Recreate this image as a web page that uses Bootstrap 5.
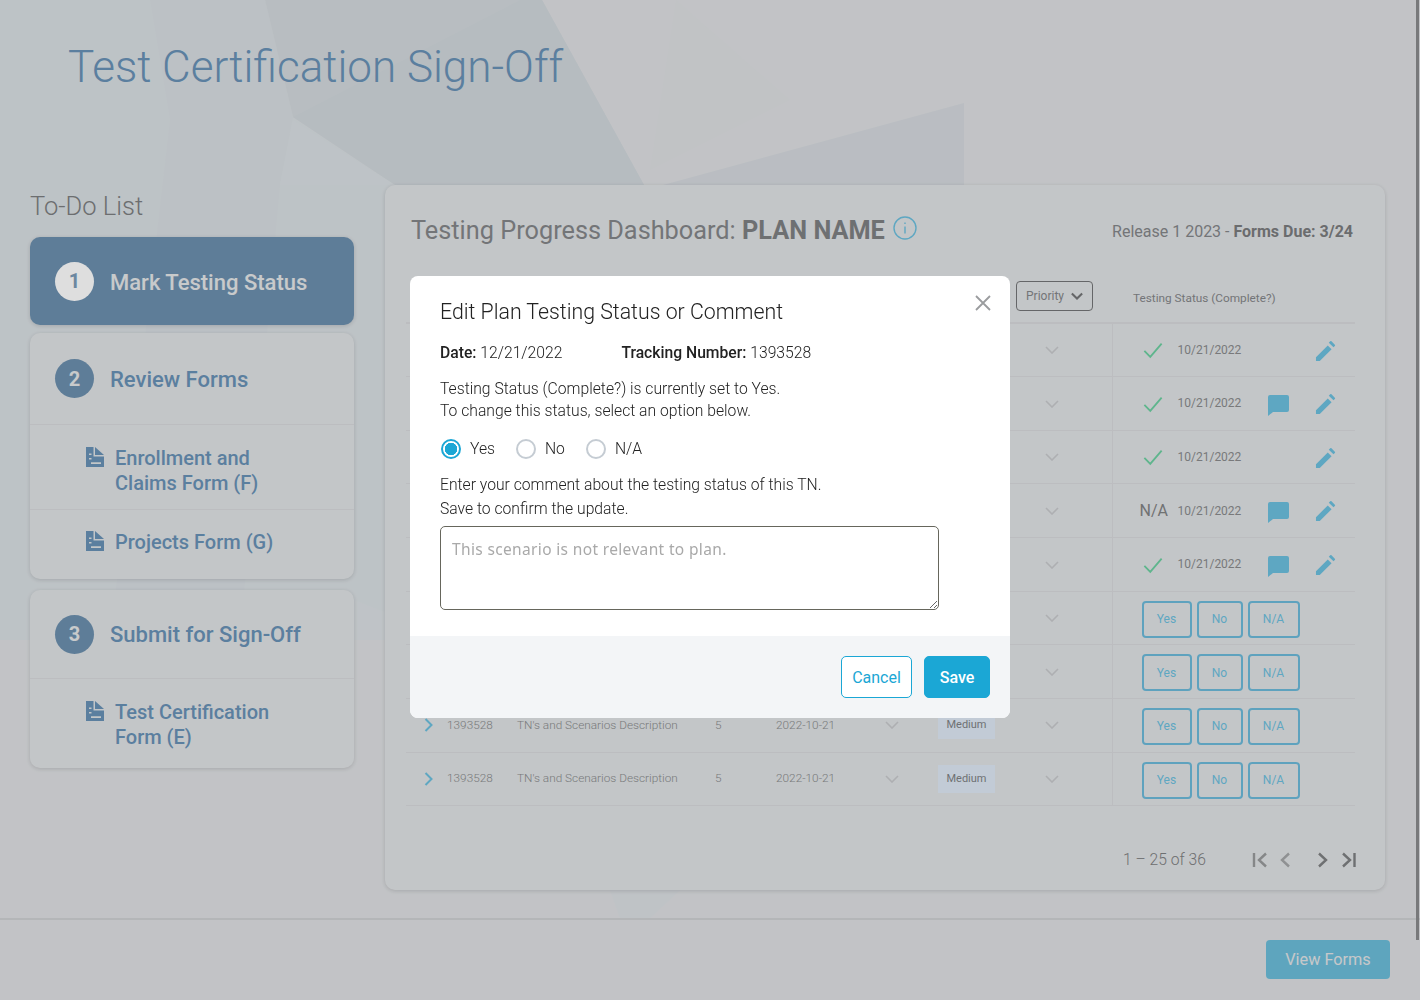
<!DOCTYPE html>
<html lang="en">
<head>
    <meta charset="UTF-8">
    <meta name="viewport" content="width=device-width, initial-scale=1.0">
    <title>Test Certification Sign-Off</title>
    <link href="https://cdn.jsdelivr.net/npm/bootstrap@5.3.0/dist/css/bootstrap.min.css" rel="stylesheet">
    <style>
        body { font-family: Roboto, "Liberation Sans", sans-serif; background: #dfe1e4; height: 1000px; overflow: hidden; position: relative; color: #818385; }
        .bg-art { position: absolute; left: 0; top: 0; z-index: 0; }
        .page-wrap { position: relative; z-index: 1; }
        .fake-scroll { position: absolute; top: 0; right: 1px; width: 3px; height: 940px; background: #8a8c8e; z-index: 2; }

        .page-head { height: 185px; padding: 40px 0 0 68px; }
        .page-head h1 { font-size: 44px; font-weight: 300; line-height: 55px; color: #6992b7; margin: 0; }

        .todo-col { width: 324px; margin-left: 30px; margin-right: 31px; }
        .todo-title { font-size: 25.5px; font-weight: 300; line-height: 42px; margin: 0 0 10px; color: #7d7f81; }
        .step-box { background: #e1e4e6; border: 0; border-radius: 10px; box-shadow: 0 1px 4px rgba(0,0,0,.14); margin-bottom: 8px; overflow: hidden; }
        .step-box.is-active { background: #6d90af; height: 88px; }
        .step-head { display: flex; align-items: center; gap: 16px; padding: 2px 0 0 25px; height: 91px; font-size: 22px; font-weight: 500; color: #6992b7; }
        .step-head.head-short { height: 88px; padding-top: 0; }
        .head-short .step-num { margin-top: 0; }
        .is-active .step-head { height: 88px; color: #e6e8ea; }
        .step-num { width: 39px; height: 39px; margin-top: -2px; border-radius: 50%; background: #6d90af; color: #e6e8ea; font-size: 20px; font-weight: 700; display: flex; align-items: center; justify-content: center; flex: none; }
        .is-active .step-num { background: #fff; color: #7d9cb8; }
        .step-link { display: flex; gap: 11px; border-top: 1px solid #d8dadd; padding: 21px 20px 0 56px; font-size: 20px; font-weight: 500; line-height: 25px; color: #6992b7; }
        .step-link svg { flex: none; width: 18px; height: 20px; margin-top: 1px; fill: #6992b7; }
        .link-two { height: 85px; }
        .link-one { height: 70px; padding-top: 20px; }
        .link-last { height: 90px; }
        .step-gap { margin-bottom: 11px; }

        .main-box { width: 1000px; height: 705px; background: #e1e4e6; border-radius: 10px; box-shadow: 0 1px 4px rgba(0,0,0,.14); padding: 0 30px 0 21px; }
        .main-top { height: 85px; padding: 28px 2px 0 5px; }
        .main-top h2 { font-size: 25.3px; font-weight: 400; line-height: 36px; margin: 0; color: #85878a; }
        .main-top h2 b { font-weight: 700; color: #7f8183; }
        .info-icon { width: 24px; height: 24px; margin: -8px 0 0 2px; }
        .release-txt { font-size: 16px; margin-top: 7px; color: #85878a; }
        .release-txt b { font-weight: 700; color: #7b7d7f; }

        .plan-table { table-layout: fixed; width: 949px; margin: 0; --bs-table-bg: transparent; --bs-table-color: #8a8c8e; font-size: 11.8px; font-weight: 300; }
        .plan-table th { height: 53px; padding: 0; border-bottom: 2px solid #d8dadd; font-size: 11.8px; font-weight: 400; color: #85878a; vertical-align: middle; }
        .plan-table td { height: 53.67px; padding: 0; border-bottom: 1px solid #d8dadd; vertical-align: middle; }
        .plan-table .cell-status { border-left: 1px solid #d8dadd; padding-left: 29px; }
        .plan-table th.cell-status { padding-left: 21px; border-left: 0; padding-top: 5px; }
        .prio-btn { display: inline-flex; align-items: center; gap: 7px; width: 77px; height: 30px; margin-left: -5px; padding: 0 9px; font-size: 12px; color: #85878a; border: 1px solid #747678; border-radius: 4px; }
        .prio-tag { display: block; width: 57px; height: 28px; line-height: 28px; text-align: center; background: #dfeaf6; font-size: 11px; font-weight: 400; color: #808285; }
        .ico-next { width: 9px; height: 14px; margin-left: 18px; stroke: #6dc0df; stroke-width: 2; fill: none; }
        .ico-down { width: 14px; height: 8px; stroke: #c8cacd; stroke-width: 1.6; fill: none; }
        .ico-date { margin-left: 19px; }
        .prio-btn .ico-down { stroke: #747678; stroke-width: 2.4; }
        .st-row { display: flex; align-items: center; }
        .st-mark { width: 36px; flex: none; font-size: 16px; font-weight: 400; white-space: nowrap; color: #818385; }
        .st-mark.is-na { margin-left: -2px; width: 38px; }
        .st-mark svg { width: 20px; height: 17px; stroke: #6dd0a2; stroke-width: 2; fill: none; margin-left: 1px; }
        .st-date { width: 89px; flex: none; font-size: 12px; font-weight: 400; color: #8a8c8e; }
        .st-note { width: 48px; flex: none; height: 22px; margin-top: 3px; }
        .st-note svg { display: block; width: 22px; height: 22px; fill: #6dc0df; }
        .st-edit { width: 23px; height: 23px; fill: #6dc0df; }
        .pick-row { display: flex; gap: 5px; margin-top: 2px; }
        .pick-btn { height: 37px; padding: 0; font-size: 12px; color: #6dc0df; border: 2px solid #6dbbdb; border-radius: 4px; background: transparent; }
        .pick-yes { width: 50px; } .pick-no { width: 46px; } .pick-na { width: 52px; }
        .pager-row { height: 107px; margin-right: -1px; }
        .pager-txt { font-size: 15.7px; font-weight: 300; margin-right: 46px; color: #7e8082; }
        .pager-row svg { width: 16px; height: 16px; fill: none; stroke-width: 2.4; }
        .pager-icons { display: flex; align-items: center; gap: 10px; }
        .pager-icons .pg-gap { margin-left: 10px; }

        .page-foot { margin-top: 28px; border-top: 2px solid #cfd1d4; padding: 20px 30px 0 0; }
        .view-btn { width: 124px; height: 39px; padding: 1px 0 0; font-size: 16.3px; color: #e4e6e8; background: #6dbedb; border: 0; border-radius: 4px; }

        .modal-backdrop.show { opacity: .13; background: #000; }
        .edit-dialog { max-width: 600px; width: 600px; margin: 276px 0 0 410px; }
        .edit-dialog .modal-content { height: 442px; border: 0; border-radius: 8px; overflow: hidden; font-size: 15.7px; color: #333; font-weight: 400; }
        .edit-dialog .modal-header { border: 0; padding: 21px 17px 0 30px; align-items: flex-start; }
        .edit-dialog .modal-title { font-size: 21.3px; font-weight: 300; line-height: 30px; color: #222; }
        .close-x { width: 20px; height: 20px; margin: -7px 0 0; background: none; border: 0; padding: 0; stroke: #9a9c9e; }
        .edit-dialog .modal-body { padding: 14px 30px 0; flex: none; height: 309px; }
        .edit-dialog .modal-body p { line-height: 24px; margin: 0; font-weight: 300; color: #222; }
        .edit-dialog .modal-body p.tight { line-height: 22px; }
        .meta-row { display: flex; gap: 59px; margin-bottom: 13px; font-weight: 300; line-height: 24px; color: #222; }
        .meta-row b { font-weight: 500; }
        .radio-row { display: flex; gap: 20px; margin: 15px 0 12px; height: 24px; font-weight: 300; color: #222; }
        .radio-row .form-check { display: flex; align-items: center; gap: 9px; padding: 0; margin: 0; min-height: 0; }
        .radio-row .form-check-input { float: none; width: 20px; height: 20px; margin: 0 0 0 1px; border: 2px solid #c5ccd3; }
        .radio-row .form-check-input:checked { background: #fff radial-gradient(circle, #1ba7d5 0 6px, #fff 6.5px); border-color: #1ba7d5; }
        .note-area { height: 84px; margin-top: 5px; width: 499px; border: 1px solid #66665c; border-radius: 5px; padding: 10px 11px; font-family: "Noto Sans", sans-serif; font-size: 15.5px; line-height: 24px; }
        .note-area::placeholder { color: #a9a9a9; letter-spacing: .35px; }
        .edit-dialog .modal-footer { background: #f3f5f7; border: 0; border-radius: 0; padding: 20px; flex: 1; align-items: flex-start; gap: 12px; }
        .edit-dialog .modal-footer .btn { margin: 0; height: 42px; padding: 1px 0 0; font-size: 16px; border-radius: 5px; }
        .btn-cancel { width: 71px; background: #fff; color: #1ba7d5; border: 1px solid #1ba7d5; font-weight: 400; }
        .btn-save { width: 66px; background: #1ba7d5; color: #fff; border: 1px solid #1ba7d5; font-weight: 500; }
    </style>
</head>
<body>
    <svg width="0" height="0" class="position-absolute">
        <symbol id="i-doc" viewBox="0 0 18 20"><path fill-rule="evenodd" d="M0 0h7.500v9.500H18V20H0zM3 6.500v1.600h2.500V6.500zM3 11v1.600h2.500V11zM5 15.200v1.800h10v-1.800z"/><path d="M9 0l9 8H9z"/></symbol>
        <symbol id="i-next" viewBox="0 0 9 14"><path d="M1.500 1l6 6-6 6"/></symbol>
        <symbol id="i-down" viewBox="0 0 14 8"><path d="M1 1l6 6 6-6"/></symbol>
        <symbol id="i-check" viewBox="0 0 22 18"><path d="M1.500 9.500l6.500 6.500L20.500 1.500"/></symbol>
        <symbol id="i-note" viewBox="0 0 22 22"><path d="M3 1h17a2 2 0 0 1 2 2v13a2 2 0 0 1-2 2H6l-5 4V3a2 2 0 0 1 2-2z"/></symbol>
        <symbol id="i-edit" viewBox="0 0 24 24"><path d="M1 19v4h4L17.300 10.700l-4-4zM20.700 7.300a1 1 0 0 0 0-1.400l-3.500-3.500a1 1 0 0 0-1.400 0l-1.400 1.400 4.900 4.900z"/></symbol>
    </svg>

    <svg class="bg-art" width="1420" height="918" viewBox="0 0 1420 918">
        <polygon points="0,0 265,0 293,117 395,185 385,640 0,640" fill="#dae0e4"/>
        <polygon points="150,0 265,0 293,117 280,185 240,640 110,640 170,120" fill="#d8dee3"/>
        <polygon points="265,0 542,0 644,185 395,185 293,117" fill="#d4dade"/>
        <polygon points="293,117 520,0 542,0 644,185 395,185" fill="#d2d8dd"/>
        <polygon points="293,120 280,185 395,185" fill="#dbe1e5"/>
        <polygon points="663,185 964,103 964,185" fill="#d6dadf"/>
        <polygon points="676,0 790,100 650,170" fill="#dee0e3"/>
        <polygon points="354,600 385,612 385,640 354,640" fill="#dce1e5"/>
        <polygon points="610,890 680,890 650,918 620,918" fill="#dce0e4"/>
    </svg>
    <div class="fake-scroll"></div>

    <div class="page-wrap">
        <div class="page-head"><h1>Test Certification Sign-Off</h1></div>

        <div class="d-flex">
            <div class="todo-col">
                <h3 class="todo-title">To-Do List</h3>
                <div class="step-box is-active">
                    <div class="step-head"><span class="step-num">1</span>Mark Testing Status</div>
                </div>
                <div class="step-box step-gap">
                    <div class="step-head"><span class="step-num">2</span>Review Forms</div>
                    <div class="step-link link-two"><svg><use href="#i-doc"/></svg><span>Enrollment and<br>Claims Form (F)</span></div>
                    <div class="step-link link-one"><svg><use href="#i-doc"/></svg><span>Projects Form (G)</span></div>
                </div>
                <div class="step-box">
                    <div class="step-head head-short"><span class="step-num">3</span>Submit for Sign-Off</div>
                    <div class="step-link link-last"><svg><use href="#i-doc"/></svg><span>Test Certification<br>Form (E)</span></div>
                </div>
            </div>

            <div class="main-box">
                <div class="main-top d-flex justify-content-between align-items-start">
                    <h2>Testing Progress Dashboard: <b>PLAN NAME</b>
                        <svg class="info-icon" viewBox="0 0 24 24" fill="none" stroke="#6dc0df" stroke-width="1.4"><circle cx="12" cy="12" r="11"/><path d="M12 10.500v7M12 6.500v1.600"/></svg>
                    </h2>
                    <div class="release-txt">Release 1 2023 - <b>Forms Due: 3/24</b></div>
                </div>

                <table class="table plan-table">
                    <colgroup><col style="width:41px"><col style="width:70px"><col style="width:198px"><col style="width:61px"><col style="width:90px"><col style="width:72px"><col style="width:83px"><col style="width:91px"><col style="width:243px"></colgroup>
                    <thead>
                        <tr>
                            <th colspan="7"></th>
                            <th><span class="prio-btn">Priority <svg class="ico-down"><use href="#i-down"/></svg></span></th>
                            <th class="cell-status">Testing Status (Complete?)</th>
                        </tr>
                    </thead>
                    <tbody>
                        <!-- rows 1-7 sit under the dialog, only the right hand cells show -->
                        <tr><td colspan="7"></td><td><svg class="ico-down ms-4"><use href="#i-down"/></svg></td>
                            <td class="cell-status"><div class="st-row"><span class="st-mark"><svg><use href="#i-check"/></svg></span><span class="st-date">10/21/2022</span><span class="st-note"></span><svg class="st-edit"><use href="#i-edit"/></svg></div></td></tr>
                        <tr><td colspan="7"></td><td><svg class="ico-down ms-4"><use href="#i-down"/></svg></td>
                            <td class="cell-status"><div class="st-row"><span class="st-mark"><svg><use href="#i-check"/></svg></span><span class="st-date">10/21/2022</span><span class="st-note"><svg><use href="#i-note"/></svg></span><svg class="st-edit"><use href="#i-edit"/></svg></div></td></tr>
                        <tr><td colspan="7"></td><td><svg class="ico-down ms-4"><use href="#i-down"/></svg></td>
                            <td class="cell-status"><div class="st-row"><span class="st-mark"><svg><use href="#i-check"/></svg></span><span class="st-date">10/21/2022</span><span class="st-note"></span><svg class="st-edit"><use href="#i-edit"/></svg></div></td></tr>
                        <tr><td colspan="7"></td><td><svg class="ico-down ms-4"><use href="#i-down"/></svg></td>
                            <td class="cell-status"><div class="st-row"><span class="st-mark is-na">N/A</span><span class="st-date">10/21/2022</span><span class="st-note"><svg><use href="#i-note"/></svg></span><svg class="st-edit"><use href="#i-edit"/></svg></div></td></tr>
                        <tr><td colspan="7"></td><td><svg class="ico-down ms-4"><use href="#i-down"/></svg></td>
                            <td class="cell-status"><div class="st-row"><span class="st-mark"><svg><use href="#i-check"/></svg></span><span class="st-date">10/21/2022</span><span class="st-note"><svg><use href="#i-note"/></svg></span><svg class="st-edit"><use href="#i-edit"/></svg></div></td></tr>
                        <tr><td colspan="7"></td><td><svg class="ico-down ms-4"><use href="#i-down"/></svg></td>
                            <td class="cell-status"><div class="pick-row"><button class="btn pick-btn pick-yes">Yes</button><button class="btn pick-btn pick-no">No</button><button class="btn pick-btn pick-na">N/A</button></div></td></tr>
                        <tr><td colspan="7"></td><td><svg class="ico-down ms-4"><use href="#i-down"/></svg></td>
                            <td class="cell-status"><div class="pick-row"><button class="btn pick-btn pick-yes">Yes</button><button class="btn pick-btn pick-no">No</button><button class="btn pick-btn pick-na">N/A</button></div></td></tr>
                        <tr><td><svg class="ico-next"><use href="#i-next"/></svg></td><td>1393528</td><td>TN's and Scenarios Description</td><td>5</td><td>2022-10-21</td><td><svg class="ico-down ico-date"><use href="#i-down"/></svg></td><td><span class="prio-tag">Medium</span></td><td><svg class="ico-down ms-4"><use href="#i-down"/></svg></td>
                            <td class="cell-status"><div class="pick-row"><button class="btn pick-btn pick-yes">Yes</button><button class="btn pick-btn pick-no">No</button><button class="btn pick-btn pick-na">N/A</button></div></td></tr>
                        <tr><td><svg class="ico-next"><use href="#i-next"/></svg></td><td>1393528</td><td>TN's and Scenarios Description</td><td>5</td><td>2022-10-21</td><td><svg class="ico-down ico-date"><use href="#i-down"/></svg></td><td><span class="prio-tag">Medium</span></td><td><svg class="ico-down ms-4"><use href="#i-down"/></svg></td>
                            <td class="cell-status"><div class="pick-row"><button class="btn pick-btn pick-yes">Yes</button><button class="btn pick-btn pick-no">No</button><button class="btn pick-btn pick-na">N/A</button></div></td></tr>
                    </tbody>
                </table>

                <div class="pager-row d-flex align-items-center justify-content-end">
                    <span class="pager-txt">1 – 25 of 36</span>
                    <div class="pager-icons">
                        <svg viewBox="0 0 16 16" stroke="#999b9d"><path d="M2 1v14M14 1.500l-7 6.500 7 6.500"/></svg>
                        <svg viewBox="0 0 16 16" stroke="#a5a7a9"><path d="M11 1.500l-7 6.500 7 6.500"/></svg>
                        <svg viewBox="0 0 16 16" stroke="#7f8183" class="pg-gap"><path d="M5 1.500l7 6.500-7 6.500"/></svg>
                        <svg viewBox="0 0 16 16" stroke="#7f8183"><path d="M14.500 1v14M3 1.500l7 6.500-7 6.500"/></svg>
                    </div>
                </div>
            </div>
        </div>

        <div class="page-foot d-flex justify-content-end">
            <button class="btn view-btn">View Forms</button>
        </div>
    </div>

    <div class="modal-backdrop show"></div>
    <div class="modal d-block" tabindex="-1">
        <div class="modal-dialog edit-dialog">
            <div class="modal-content">
                <div class="modal-header">
                    <h5 class="modal-title">Edit Plan Testing Status or Comment</h5>
                    <button class="close-x ms-auto" aria-label="Close"><svg width="20" height="20" viewBox="0 0 20 20" fill="none" stroke-width="1.8"><path d="M3 3l14 14M17 3L3 17"/></svg></button>
                </div>
                <div class="modal-body">
                    <div class="meta-row"><span><b>Date:</b> 12/21/2022</span><span><b>Tracking Number:</b> 1393528</span></div>
                    <p class="tight">Testing Status (Complete?) is currently set to Yes.</p>
                    <p class="tight">To change this status, select an option below.</p>
                    <div class="radio-row">
                        <div class="form-check"><input class="form-check-input" type="radio" name="st" id="st1" checked><label for="st1">Yes</label></div>
                        <div class="form-check"><input class="form-check-input" type="radio" name="st" id="st2"><label for="st2">No</label></div>
                        <div class="form-check"><input class="form-check-input" type="radio" name="st" id="st3"><label for="st3">N/A</label></div>
                    </div>
                    <p>Enter your comment about the testing status of this TN.</p>
                    <p>Save to confirm the update.</p>
                    <textarea class="form-control note-area" placeholder="This scenario is not relevant to plan."></textarea>
                </div>
                <div class="modal-footer">
                    <button class="btn btn-cancel">Cancel</button>
                    <button class="btn btn-save">Save</button>
                </div>
            </div>
        </div>
    </div>

    <script src="https://cdn.jsdelivr.net/npm/bootstrap@5.3.0/dist/js/bootstrap.bundle.min.js"></script>
</body>
</html>
